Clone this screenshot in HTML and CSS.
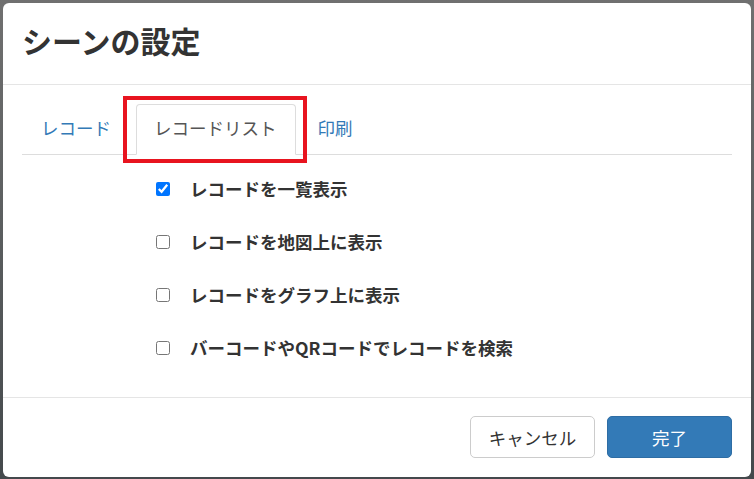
FILE: index.html
```html
<!DOCTYPE html>
<html lang="ja">
<head>
<meta charset="utf-8">
<title>シーンの設定</title>
<link rel="stylesheet" href="styles.css">
</head>
<body>
<div class="backdrop">
  <div class="modal">
    <div class="modal-header">
      <h4 class="modal-title">シーンの設定</h4>
    </div>
    <div class="modal-body">
      <ul class="nav-tabs">
        <li class="tab first"><a>レコード</a></li>
        <li class="tab active"><a>レコードリスト</a></li>
        <li class="tab"><a>印刷</a></li>
      </ul>
      <div class="highlight"></div>
      <div class="options">
        <label class="option"><input type="checkbox" class="check" checked><span class="label-text">レコードを一覧表示</span></label>
        <label class="option"><input type="checkbox" class="check"><span class="label-text">レコードを地図上に表示</span></label>
        <label class="option"><input type="checkbox" class="check"><span class="label-text">レコードをグラフ上に表示</span></label>
        <label class="option"><input type="checkbox" class="check"><span class="label-text">バーコードやQRコードでレコードを検索</span></label>
      </div>
    </div>
    <div class="modal-footer">
      <button class="btn btn-default">キャンセル</button>
      <button class="btn btn-primary">完了</button>
    </div>
  </div>
</div>
</body>
</html>
```

FILE: styles.css
```css
html, body {
  margin: 0;
  padding: 0;
}
body {
  width: 754px;
  height: 479px;
  overflow: hidden;
  font-family: "Noto Sans CJK JP", "Liberation Sans", sans-serif;
  color: #333;
}
.backdrop {
  width: 754px;
  height: 479px;
  box-sizing: border-box;
  padding: 3px 3px 2px 3px;
  background: linear-gradient(to bottom, #707070 0%, #5c5f60 45%, #44494c 100%);
}
.modal {
  position: relative;
  width: 748px;
  height: 474px;
  background: #fff;
  border-radius: 6px;
  display: flex;
  flex-direction: column;
}
.modal-header {
  height: 81px;
  border-bottom: 1px solid #e5e5e5;
  padding: 0 19px;
  display: flex;
  align-items: center;
}
.modal-title {
  margin: 0;
  font-size: 30px;
  font-weight: bold;
  line-height: 1;
  color: #333;
  position: relative;
  top: -4px;
}
.modal-body {
  padding: 19px 19px 23px 19px;
}
.nav-tabs {
  list-style: none;
  margin: 0;
  padding: 0;
  display: flex;
  border-bottom: 1px solid #ddd;
  height: 50px;
}
.tab {
  margin-right: 2px;
  margin-bottom: -1px;
  display: flex;
}
.tab a {
  display: flex;
  align-items: center;
  box-sizing: border-box;
  padding: 0 20px 4px 19px;
  font-size: 17.5px;
  color: #337ab7;
  border: 1px solid transparent;
  border-radius: 4px 4px 0 0;
  height: 51px;
}
.tab.first a {
  padding: 0 22px 4px 18px;
}
.tab.active a {
  color: #555;
  background: #fff;
  border-color: #ddd #ddd transparent #ddd;
  padding: 0 18px 4px 17px;
}
.highlight {
  position: absolute;
  left: 120px;
  top: 93px;
  width: 176px;
  height: 59px;
  border: 4px solid #e8141f;
}
.options {
  margin-top: 7px;
  padding-left: 134px;
  display: flex;
  flex-direction: column;
}
.option {
  height: 53px;
  display: flex;
  align-items: center;
}
.check {
  margin: 0;
  width: 14px;
  height: 14px;
  accent-color: #0075ff;
}
.label-text {
  margin-left: 20px;
  font-size: 17.5px;
  font-weight: bold;
  color: #333;
}
.modal-footer {
  border-top: 1px solid #e5e5e5;
  padding: 18px 19px 0 19px;
  display: flex;
  justify-content: flex-end;
  gap: 12px;
}
.btn {
  width: 125px;
  height: 42px;
  border-radius: 5px;
  font-family: "Noto Sans CJK JP", "Liberation Sans", sans-serif;
  font-size: 17.5px;
  padding: 0;
}
.btn-default {
  background: #fff;
  border: 1px solid #ccc;
  color: #333;
}
.btn-primary {
  background: #337ab7;
  border: 1px solid #2e6da4;
  color: #fff;
}
```
